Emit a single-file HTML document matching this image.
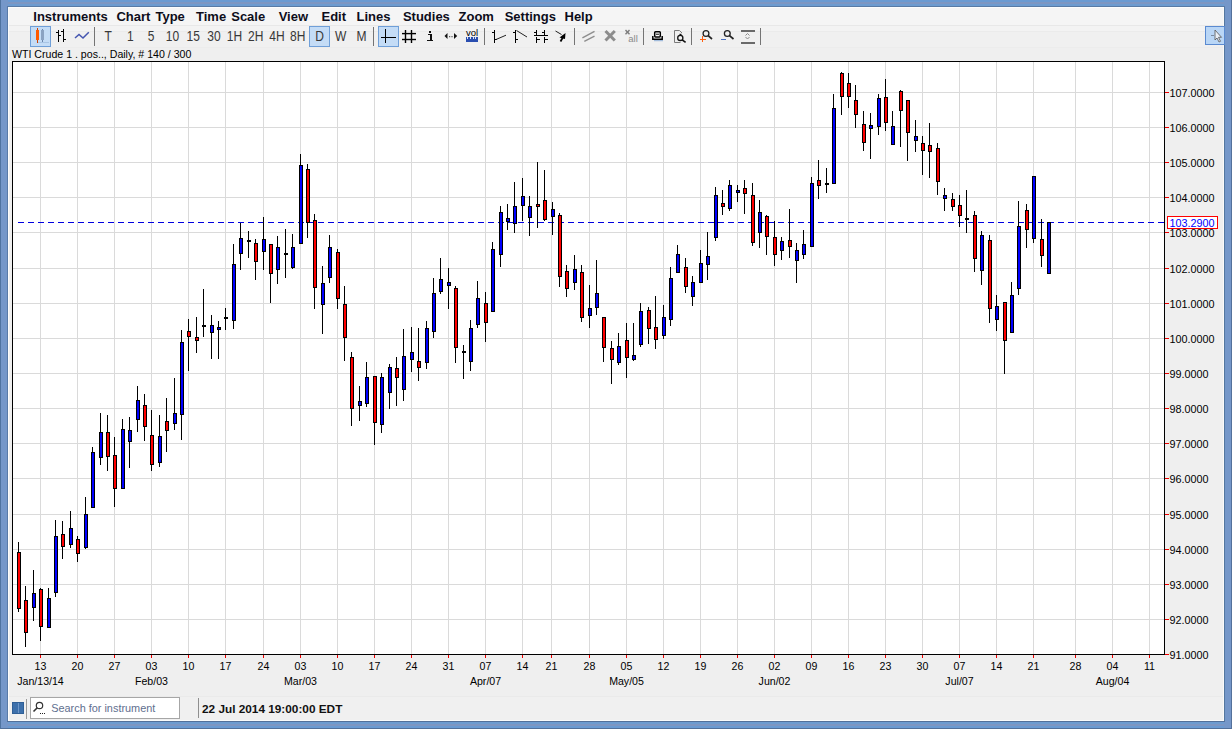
<!DOCTYPE html>
<html><head><meta charset="utf-8"><style>
html,body{margin:0;padding:0;}
body{width:1232px;height:729px;overflow:hidden;position:relative;background:#efefef;font-family:"Liberation Sans",sans-serif;}
svg{position:absolute;left:0;top:0;}
.lb{font-family:"Liberation Sans",sans-serif;font-size:10.6px;fill:#000;}
.mn{font-family:"Liberation Sans",sans-serif;font-size:13px;font-weight:bold;fill:#0d0d1a;word-spacing:1.5px;}
.tbt{font-family:"Liberation Sans",sans-serif;font-size:14px;fill:#383838;}
.vol{font-family:"Liberation Sans",sans-serif;font-size:9.5px;fill:#000;}
.all{font-family:"Liberation Sans",sans-serif;font-size:9.5px;fill:#8a8a8a;}
.st{font-family:"Liberation Sans",sans-serif;font-size:11.8px;font-weight:bold;fill:#111;}
.sr{font-family:"Liberation Sans",sans-serif;font-size:10.9px;fill:#5f6f8f;}
</style></head><body>
<svg width="1232" height="729" viewBox="0 0 1232 729" shape-rendering="crispEdges">
<!-- window frame -->
<rect x="0" y="0" width="1232" height="729" fill="#7597c9"/>
<rect x="8" y="0" width="1216" height="2" fill="#6a9ad2"/>
<rect x="8" y="2" width="1216" height="2" fill="#7d96c2"/>
<rect x="8" y="4" width="1216" height="2" fill="#6d9bd0"/>
<rect x="7" y="6" width="1218" height="1" fill="#587aa5"/>
<rect x="8" y="722" width="1216" height="2" fill="#6d9bd0"/>
<rect x="8" y="724" width="1216" height="2" fill="#7d96c2"/>
<rect x="8" y="726" width="1216" height="2" fill="#6a9ad2"/>
<rect x="0" y="728" width="1232" height="1" fill="#52709a"/>
<rect x="0" y="0" width="1" height="729" fill="#4f73a0"/>
<rect x="7" y="7" width="1" height="715" fill="#587aa8"/>
<rect x="1224" y="7" width="1" height="715" fill="#54779f"/>
<rect x="1231" y="0" width="1" height="729" fill="#54719b"/>
<rect x="7" y="721" width="1218" height="1" fill="#52709a"/>
<!-- client -->
<rect x="8" y="7" width="1216" height="714" fill="#efefef"/>
<rect x="8" y="7" width="1216" height="18" fill="#f5f5f5"/>
<rect x="8" y="25" width="1216" height="1" fill="#e8e8e8"/>
<rect x="8" y="26" width="1216" height="5" fill="#f3f3f3"/>
<rect x="8" y="31" width="1216" height="1" fill="#ebebeb"/>
<rect x="8" y="32" width="1216" height="15" fill="#f0f0f0"/>
<rect x="8" y="47" width="1216" height="1" fill="#ececec"/>
<rect x="8" y="696" width="1216" height="25" fill="#f0f0f0"/>
<rect x="8" y="696" width="1216" height="1" fill="#eaeaea"/>
<rect x="1223" y="7" width="1" height="714" fill="#fafafa"/>
<rect x="8" y="720" width="1216" height="1" fill="#fafafa"/>
<rect x="8" y="7" width="1" height="714" fill="#fcfcfc"/>
<rect x="8" y="7" width="1216" height="1" fill="#fcfcfc"/>
<text x="33.3" y="21" class="mn">Instruments</text>
<text x="116.4" y="21" class="mn">Chart Type</text>
<text x="196" y="21" class="mn">Time Scale</text>
<text x="278.7" y="21" class="mn">View</text>
<text x="321.5" y="21" class="mn">Edit</text>
<text x="356.5" y="21" class="mn">Lines</text>
<text x="402.9" y="21" class="mn">Studies</text>
<text x="458.5" y="21" class="mn">Zoom</text>
<text x="504.7" y="21" class="mn">Settings</text>
<text x="564.5" y="21" class="mn">Help</text>
<rect x="30.5" y="26.5" width="20" height="20" fill="#c4dcf6" stroke="#6f9fd8"/>
<rect x="37" y="28" width="1" height="15" fill="#d04000"/>
<rect x="36" y="30" width="3" height="10" fill="#ff5a00"/>
<rect x="42" y="29" width="1" height="13" fill="#6a84a8"/>
<rect x="41" y="30" width="3" height="10" fill="#8aa2c2"/>
<rect x="38" y="42" width="11" height="1" fill="#a8c4e4"/>
<g fill="#000"><rect x="58" y="30" width="1" height="12"/><rect x="56" y="32" width="2" height="1"/><rect x="59" y="35" width="2" height="1"/><rect x="63" y="29" width="1" height="13"/><rect x="61" y="31" width="2" height="1"/><rect x="64" y="39" width="2" height="1"/></g>
<polyline points="75,38 79,34.5 83,38 88.8,32.3" fill="none" stroke="#4455b0" stroke-width="1.5" shape-rendering="auto"/>
<rect x="94" y="27" width="1" height="19" fill="#747474"/>
<rect x="309.5" y="26.5" width="20" height="20" fill="#c4dcf6" stroke="#6f9fd8"/>
<text transform="translate(108.2,41) scale(0.86,1)" x="0" y="0" text-anchor="middle" class="tbt">T</text>
<text transform="translate(130.3,41) scale(0.86,1)" x="0" y="0" text-anchor="middle" class="tbt">1</text>
<text transform="translate(151,41) scale(0.86,1)" x="0" y="0" text-anchor="middle" class="tbt">5</text>
<text transform="translate(172.5,41) scale(0.86,1)" x="0" y="0" text-anchor="middle" class="tbt">10</text>
<text transform="translate(193.2,41) scale(0.86,1)" x="0" y="0" text-anchor="middle" class="tbt">15</text>
<text transform="translate(214,41) scale(0.86,1)" x="0" y="0" text-anchor="middle" class="tbt">30</text>
<text transform="translate(234.5,41) scale(0.86,1)" x="0" y="0" text-anchor="middle" class="tbt">1H</text>
<text transform="translate(255.8,41) scale(0.86,1)" x="0" y="0" text-anchor="middle" class="tbt">2H</text>
<text transform="translate(277,41) scale(0.86,1)" x="0" y="0" text-anchor="middle" class="tbt">4H</text>
<text transform="translate(297.8,41) scale(0.86,1)" x="0" y="0" text-anchor="middle" class="tbt">8H</text>
<text transform="translate(319.5,41) scale(0.86,1)" x="0" y="0" text-anchor="middle" class="tbt">D</text>
<text transform="translate(340.6,41) scale(0.86,1)" x="0" y="0" text-anchor="middle" class="tbt">W</text>
<text transform="translate(361.4,41) scale(0.86,1)" x="0" y="0" text-anchor="middle" class="tbt">M</text>
<rect x="373" y="27" width="1" height="19" fill="#747474"/>
<rect x="378.5" y="26.5" width="20" height="20" fill="#c4dcf6" stroke="#6f9fd8"/>
<rect x="381" y="37" width="15" height="1" fill="#000"/><rect x="385" y="29" width="1" height="14" fill="#000"/>
<g stroke="#000" stroke-width="1.4" shape-rendering="auto"><line x1="405.5" y1="30" x2="405.5" y2="43"/><line x1="411.5" y1="30" x2="411.5" y2="43"/><line x1="402" y1="33.6" x2="416" y2="33.6"/><line x1="402" y1="39.5" x2="416" y2="39.5"/></g>
<g fill="#111"><rect x="429" y="31" width="2" height="2"/><rect x="428" y="34" width="2" height="1"/><rect x="430" y="34" width="1.6" height="7"/><rect x="427" y="40" width="6" height="1.4"/></g>
<g fill="#111" shape-rendering="auto"><polygon points="444.5,36 447.5,33 447.5,39"/><polygon points="457.2,36 454,33 454,39"/><rect x="449.2" y="36.2" width="1" height="1"/><rect x="451.5" y="36.2" width="1" height="1"/></g>
<text x="472" y="35.6" text-anchor="middle" class="vol">vol</text>
<rect x="466" y="37" width="12" height="4.5" fill="#2a4eb0"/><g fill="#dde4f4"><rect x="467" y="37" width="1" height="2"/><rect x="470" y="37" width="1" height="2"/><rect x="472.5" y="37" width="1" height="2"/><rect x="475" y="37" width="1" height="2"/></g>
<rect x="484" y="28" width="1" height="17" fill="#747474"/>
<g fill="#000"><rect x="494" y="30" width="1" height="13"/><rect x="492" y="32" width="2" height="1"/><rect x="495" y="39" width="2" height="1"/><rect x="515" y="30" width="1" height="13"/><rect x="513" y="32" width="2" height="1"/><rect x="516" y="39" width="2" height="1"/></g>
<g stroke="#222" stroke-width="1" shape-rendering="auto"><line x1="496" y1="39.5" x2="506" y2="35.2"/><line x1="516.5" y1="30.5" x2="527" y2="37"/></g>
<g fill="#000"><rect x="536" y="30" width="1" height="5"/><rect x="536" y="37" width="1" height="6"/><rect x="544" y="30" width="1" height="5"/><rect x="544" y="37" width="1" height="6"/><rect x="534" y="35" width="14" height="1"/><rect x="534" y="32" width="2" height="1"/><rect x="542" y="32" width="2" height="1"/><rect x="537" y="39" width="2.5" height="1.3"/><rect x="545" y="39" width="2.5" height="1.3"/></g>
<g shape-rendering="auto"><line x1="555.5" y1="31" x2="561.5" y2="34.5" stroke="#222" stroke-width="1"/><line x1="560.5" y1="41.5" x2="564" y2="35.5" stroke="#000" stroke-width="1.8"/><polygon points="565.5,33 565,39 559.5,37.5" fill="#000"/></g>
<rect x="574" y="28" width="1" height="17" fill="#747474"/>
<g stroke="#8e8e8e" stroke-width="1.5" fill="none" shape-rendering="auto"><line x1="582.4" y1="37.9" x2="594.5" y2="31.4"/><line x1="584.3" y1="41.3" x2="594.5" y2="36.2"/></g>
<g stroke="#8c8c8c" stroke-width="3" shape-rendering="auto"><line x1="605.5" y1="31" x2="614.8" y2="40.5"/><line x1="614.8" y1="31" x2="605.5" y2="40.5"/></g>
<g stroke="#7c7c7c" stroke-width="1.4" shape-rendering="auto"><line x1="625.5" y1="30" x2="629.5" y2="34.3"/><line x1="629.5" y1="30" x2="625.5" y2="34.3"/></g><text x="633" y="41.8" text-anchor="middle" class="all">all</text>
<rect x="643" y="28" width="1" height="17" fill="#747474"/>
<g shape-rendering="auto"><rect x="654.7" y="31.7" width="5.6" height="5.2" rx="0.8" fill="#fff" stroke="#000" stroke-width="1.5"/><rect x="656" y="33.7" width="3" height="1" fill="#000"/><path d="M652.8,36 v3.3 h9.4 v-3.3" fill="none" stroke="#000" stroke-width="1.5"/><rect x="654" y="40.2" width="9" height="1" fill="#8fb0d8"/></g>
<g shape-rendering="auto"><path d="M674.5,30.5 h5 l2.5,2.5 M674.5,30.5 v12 h6" fill="none" stroke="#7a7a7a" stroke-width="1"/><circle cx="680.3" cy="37.9" r="2.6" fill="none" stroke="#111" stroke-width="1.3"/><rect x="679.5" y="33.8" width="2" height="1.3" fill="#111"/><line x1="682.2" y1="39.8" x2="685.6" y2="42.4" stroke="#111" stroke-width="1.6"/></g>
<rect x="691" y="28" width="1" height="17" fill="#747474"/>
<g shape-rendering="auto"><circle cx="706" cy="33.5" r="2.9" fill="none" stroke="#222" stroke-width="1.3"/><line x1="708.2" y1="35.7" x2="712" y2="39" stroke="#222" stroke-width="1.7"/></g><g fill="#ff6010"><rect x="700" y="38.5" width="5.5" height="1.2"/><rect x="702" y="36.3" width="1.3" height="5.5"/></g>
<g shape-rendering="auto"><circle cx="727.3" cy="33.5" r="2.9" fill="none" stroke="#222" stroke-width="1.3"/><line x1="729.5" y1="35.7" x2="733.5" y2="39" stroke="#222" stroke-width="1.7"/></g><rect x="721" y="39" width="5" height="1" fill="#4a70c0"/>
<g fill="#6a6a6a"><rect x="741" y="30" width="14" height="2"/><rect x="741" y="41.5" width="14" height="2"/></g><g fill="none" stroke="#8a8a8a" stroke-width="1" shape-rendering="auto"><polyline points="745.5,35.5 747.5,33.5 749.5,35.5"/><polyline points="745.5,37 747.5,39 749.5,37"/></g>
<rect x="760" y="28" width="1" height="17" fill="#747474"/>
<rect x="1205.5" y="26.5" width="18.5" height="18" fill="#b9d6f6" stroke="#5a8ad0"/>
<path d="M1215,30 l0,10 l2,-2 l2,4 l1.5,-0.7 l-2,-4 l3,0 z" fill="#e8eef6" stroke="#555" stroke-width="0.8" shape-rendering="auto"/><rect x="1211" y="35" width="3" height="1" fill="#7a8aa0"/>
<text x="12" y="58" class="lb">WTI Crude 1 . pos.., Daily, # 140 / 300</text>
<rect x="12" y="61" width="1153" height="594" fill="#fff"/>
<rect x="40" y="62" width="1" height="592" fill="#dadada"/>
<rect x="77" y="62" width="1" height="592" fill="#dadada"/>
<rect x="114" y="62" width="1" height="592" fill="#dadada"/>
<rect x="151" y="62" width="1" height="592" fill="#dadada"/>
<rect x="188" y="62" width="1" height="592" fill="#dadada"/>
<rect x="225" y="62" width="1" height="592" fill="#dadada"/>
<rect x="263" y="62" width="1" height="592" fill="#dadada"/>
<rect x="300" y="62" width="1" height="592" fill="#dadada"/>
<rect x="337" y="62" width="1" height="592" fill="#dadada"/>
<rect x="374" y="62" width="1" height="592" fill="#dadada"/>
<rect x="411" y="62" width="1" height="592" fill="#dadada"/>
<rect x="448" y="62" width="1" height="592" fill="#dadada"/>
<rect x="485" y="62" width="1" height="592" fill="#dadada"/>
<rect x="522" y="62" width="1" height="592" fill="#dadada"/>
<rect x="551" y="62" width="1" height="592" fill="#dadada"/>
<rect x="589" y="62" width="1" height="592" fill="#dadada"/>
<rect x="626" y="62" width="1" height="592" fill="#dadada"/>
<rect x="663" y="62" width="1" height="592" fill="#dadada"/>
<rect x="700" y="62" width="1" height="592" fill="#dadada"/>
<rect x="737" y="62" width="1" height="592" fill="#dadada"/>
<rect x="774" y="62" width="1" height="592" fill="#dadada"/>
<rect x="811" y="62" width="1" height="592" fill="#dadada"/>
<rect x="848" y="62" width="1" height="592" fill="#dadada"/>
<rect x="885" y="62" width="1" height="592" fill="#dadada"/>
<rect x="922" y="62" width="1" height="592" fill="#dadada"/>
<rect x="959" y="62" width="1" height="592" fill="#dadada"/>
<rect x="996" y="62" width="1" height="592" fill="#dadada"/>
<rect x="1033" y="62" width="1" height="592" fill="#dadada"/>
<rect x="1075" y="62" width="1" height="592" fill="#dadada"/>
<rect x="1112" y="62" width="1" height="592" fill="#dadada"/>
<rect x="1149" y="62" width="1" height="592" fill="#dadada"/>
<rect x="13" y="619" width="1151" height="1" fill="#dadada"/>
<rect x="13" y="584" width="1151" height="1" fill="#dadada"/>
<rect x="13" y="549" width="1151" height="1" fill="#dadada"/>
<rect x="13" y="514" width="1151" height="1" fill="#dadada"/>
<rect x="13" y="478" width="1151" height="1" fill="#dadada"/>
<rect x="13" y="443" width="1151" height="1" fill="#dadada"/>
<rect x="13" y="408" width="1151" height="1" fill="#dadada"/>
<rect x="13" y="373" width="1151" height="1" fill="#dadada"/>
<rect x="13" y="338" width="1151" height="1" fill="#dadada"/>
<rect x="13" y="303" width="1151" height="1" fill="#dadada"/>
<rect x="13" y="268" width="1151" height="1" fill="#dadada"/>
<rect x="13" y="232" width="1151" height="1" fill="#dadada"/>
<rect x="13" y="197" width="1151" height="1" fill="#dadada"/>
<rect x="13" y="162" width="1151" height="1" fill="#dadada"/>
<rect x="13" y="127" width="1151" height="1" fill="#dadada"/>
<rect x="13" y="92" width="1151" height="1" fill="#dadada"/>
<line x1="18" y1="222.5" x2="1164" y2="222.5" stroke="#0000e0" stroke-width="1" stroke-dasharray="6 4"/>
<rect x="18" y="542" width="1" height="70" fill="#000"/>
<rect x="17" y="552" width="4" height="57" fill="#000"/>
<rect x="18" y="553" width="2" height="55" fill="#f00"/>
<rect x="25" y="586" width="1" height="61" fill="#000"/>
<rect x="24" y="600" width="4" height="33" fill="#000"/>
<rect x="25" y="601" width="2" height="31" fill="#f00"/>
<rect x="33" y="570" width="1" height="51" fill="#000"/>
<rect x="32" y="593" width="4" height="15" fill="#000"/>
<rect x="33" y="594" width="2" height="13" fill="#00f"/>
<rect x="40" y="588" width="1" height="53" fill="#000"/>
<rect x="39" y="589" width="4" height="38" fill="#000"/>
<rect x="40" y="590" width="2" height="36" fill="#f00"/>
<rect x="48" y="588" width="1" height="40" fill="#000"/>
<rect x="47" y="598" width="4" height="30" fill="#000"/>
<rect x="48" y="599" width="2" height="28" fill="#00f"/>
<rect x="55" y="520" width="1" height="77" fill="#000"/>
<rect x="54" y="536" width="4" height="57" fill="#000"/>
<rect x="55" y="537" width="2" height="55" fill="#00f"/>
<rect x="62" y="521" width="1" height="38" fill="#000"/>
<rect x="61" y="534" width="4" height="13" fill="#000"/>
<rect x="62" y="535" width="2" height="11" fill="#f00"/>
<rect x="70" y="511" width="1" height="37" fill="#000"/>
<rect x="69" y="528" width="4" height="17" fill="#000"/>
<rect x="70" y="529" width="2" height="15" fill="#00f"/>
<rect x="77" y="536" width="1" height="26" fill="#000"/>
<rect x="76" y="539" width="4" height="15" fill="#000"/>
<rect x="77" y="540" width="2" height="13" fill="#f00"/>
<rect x="85" y="497" width="1" height="52" fill="#000"/>
<rect x="84" y="514" width="4" height="34" fill="#000"/>
<rect x="85" y="515" width="2" height="32" fill="#00f"/>
<rect x="92" y="447" width="1" height="61" fill="#000"/>
<rect x="91" y="452" width="4" height="56" fill="#000"/>
<rect x="92" y="453" width="2" height="54" fill="#00f"/>
<rect x="100" y="413" width="1" height="52" fill="#000"/>
<rect x="99" y="432" width="4" height="26" fill="#000"/>
<rect x="100" y="433" width="2" height="24" fill="#00f"/>
<rect x="107" y="415" width="1" height="56" fill="#000"/>
<rect x="106" y="432" width="4" height="25" fill="#000"/>
<rect x="107" y="433" width="2" height="23" fill="#f00"/>
<rect x="114" y="437" width="1" height="70" fill="#000"/>
<rect x="113" y="455" width="4" height="34" fill="#000"/>
<rect x="114" y="456" width="2" height="32" fill="#f00"/>
<rect x="122" y="419" width="1" height="70" fill="#000"/>
<rect x="121" y="429" width="4" height="60" fill="#000"/>
<rect x="122" y="430" width="2" height="58" fill="#00f"/>
<rect x="129" y="417" width="1" height="51" fill="#000"/>
<rect x="128" y="430" width="4" height="12" fill="#000"/>
<rect x="129" y="431" width="2" height="10" fill="#00f"/>
<rect x="137" y="386" width="1" height="46" fill="#000"/>
<rect x="136" y="400" width="4" height="20" fill="#000"/>
<rect x="137" y="401" width="2" height="18" fill="#00f"/>
<rect x="144" y="394" width="1" height="47" fill="#000"/>
<rect x="143" y="405" width="4" height="22" fill="#000"/>
<rect x="144" y="406" width="2" height="20" fill="#f00"/>
<rect x="151" y="410" width="1" height="61" fill="#000"/>
<rect x="150" y="435" width="4" height="30" fill="#000"/>
<rect x="151" y="436" width="2" height="28" fill="#f00"/>
<rect x="159" y="415" width="1" height="52" fill="#000"/>
<rect x="158" y="436" width="4" height="27" fill="#000"/>
<rect x="159" y="437" width="2" height="25" fill="#00f"/>
<rect x="166" y="398" width="1" height="54" fill="#000"/>
<rect x="165" y="421" width="4" height="10" fill="#000"/>
<rect x="166" y="422" width="2" height="8" fill="#f00"/>
<rect x="174" y="378" width="1" height="52" fill="#000"/>
<rect x="173" y="413" width="4" height="11" fill="#000"/>
<rect x="174" y="414" width="2" height="9" fill="#00f"/>
<rect x="181" y="330" width="1" height="110" fill="#000"/>
<rect x="180" y="342" width="4" height="73" fill="#000"/>
<rect x="181" y="343" width="2" height="71" fill="#00f"/>
<rect x="188" y="319" width="1" height="52" fill="#000"/>
<rect x="187" y="331" width="4" height="6" fill="#000"/>
<rect x="188" y="332" width="2" height="4" fill="#f00"/>
<rect x="196" y="317" width="1" height="36" fill="#000"/>
<rect x="195" y="337" width="4" height="4" fill="#000"/>
<rect x="196" y="338" width="2" height="2" fill="#f00"/>
<rect x="203" y="289" width="1" height="48" fill="#000"/>
<rect x="202" y="325" width="4" height="2" fill="#000"/>
<rect x="211" y="315" width="1" height="44" fill="#000"/>
<rect x="210" y="325" width="4" height="8" fill="#000"/>
<rect x="211" y="326" width="2" height="6" fill="#00f"/>
<rect x="218" y="321" width="1" height="38" fill="#000"/>
<rect x="217" y="327" width="4" height="3" fill="#000"/>
<rect x="218" y="328" width="2" height="1" fill="#00f"/>
<rect x="225" y="308" width="1" height="22" fill="#000"/>
<rect x="224" y="317" width="4" height="2" fill="#000"/>
<rect x="233" y="244" width="1" height="85" fill="#000"/>
<rect x="232" y="264" width="4" height="57" fill="#000"/>
<rect x="233" y="265" width="2" height="55" fill="#00f"/>
<rect x="240" y="223" width="1" height="47" fill="#000"/>
<rect x="239" y="238" width="4" height="16" fill="#000"/>
<rect x="240" y="239" width="2" height="14" fill="#00f"/>
<rect x="248" y="231" width="1" height="27" fill="#000"/>
<rect x="247" y="240" width="4" height="2" fill="#000"/>
<rect x="255" y="239" width="1" height="41" fill="#000"/>
<rect x="254" y="243" width="4" height="19" fill="#000"/>
<rect x="255" y="244" width="2" height="17" fill="#f00"/>
<rect x="263" y="217" width="1" height="53" fill="#000"/>
<rect x="262" y="239" width="4" height="13" fill="#000"/>
<rect x="263" y="240" width="2" height="11" fill="#00f"/>
<rect x="270" y="244" width="1" height="59" fill="#000"/>
<rect x="269" y="244" width="4" height="30" fill="#000"/>
<rect x="270" y="245" width="2" height="28" fill="#f00"/>
<rect x="277" y="236" width="1" height="48" fill="#000"/>
<rect x="276" y="247" width="4" height="23" fill="#000"/>
<rect x="277" y="248" width="2" height="21" fill="#00f"/>
<rect x="285" y="229" width="1" height="49" fill="#000"/>
<rect x="284" y="253" width="4" height="2" fill="#000"/>
<rect x="292" y="234" width="1" height="35" fill="#000"/>
<rect x="291" y="247" width="4" height="21" fill="#000"/>
<rect x="292" y="248" width="2" height="19" fill="#00f"/>
<rect x="300" y="154" width="1" height="90" fill="#000"/>
<rect x="299" y="165" width="4" height="79" fill="#000"/>
<rect x="300" y="166" width="2" height="77" fill="#00f"/>
<rect x="307" y="164" width="1" height="74" fill="#000"/>
<rect x="306" y="169" width="4" height="54" fill="#000"/>
<rect x="307" y="170" width="2" height="52" fill="#f00"/>
<rect x="314" y="214" width="1" height="95" fill="#000"/>
<rect x="313" y="220" width="4" height="68" fill="#000"/>
<rect x="314" y="221" width="2" height="66" fill="#f00"/>
<rect x="322" y="266" width="1" height="68" fill="#000"/>
<rect x="321" y="283" width="4" height="22" fill="#000"/>
<rect x="322" y="284" width="2" height="20" fill="#00f"/>
<rect x="329" y="235" width="1" height="48" fill="#000"/>
<rect x="328" y="247" width="4" height="31" fill="#000"/>
<rect x="329" y="248" width="2" height="29" fill="#00f"/>
<rect x="337" y="249" width="1" height="60" fill="#000"/>
<rect x="336" y="252" width="4" height="47" fill="#000"/>
<rect x="337" y="253" width="2" height="45" fill="#f00"/>
<rect x="344" y="286" width="1" height="75" fill="#000"/>
<rect x="343" y="304" width="4" height="34" fill="#000"/>
<rect x="344" y="305" width="2" height="32" fill="#f00"/>
<rect x="351" y="352" width="1" height="74" fill="#000"/>
<rect x="350" y="357" width="4" height="52" fill="#000"/>
<rect x="351" y="358" width="2" height="50" fill="#f00"/>
<rect x="359" y="386" width="1" height="35" fill="#000"/>
<rect x="358" y="401" width="4" height="5" fill="#000"/>
<rect x="359" y="402" width="2" height="3" fill="#00f"/>
<rect x="366" y="362" width="1" height="45" fill="#000"/>
<rect x="365" y="377" width="4" height="27" fill="#000"/>
<rect x="366" y="378" width="2" height="25" fill="#00f"/>
<rect x="374" y="376" width="1" height="69" fill="#000"/>
<rect x="373" y="376" width="4" height="47" fill="#000"/>
<rect x="374" y="377" width="2" height="45" fill="#f00"/>
<rect x="381" y="373" width="1" height="60" fill="#000"/>
<rect x="380" y="377" width="4" height="48" fill="#000"/>
<rect x="381" y="378" width="2" height="46" fill="#00f"/>
<rect x="389" y="364" width="1" height="45" fill="#000"/>
<rect x="388" y="367" width="4" height="26" fill="#000"/>
<rect x="389" y="368" width="2" height="24" fill="#00f"/>
<rect x="396" y="357" width="1" height="49" fill="#000"/>
<rect x="395" y="368" width="4" height="10" fill="#000"/>
<rect x="396" y="369" width="2" height="8" fill="#f00"/>
<rect x="403" y="329" width="1" height="72" fill="#000"/>
<rect x="402" y="356" width="4" height="34" fill="#000"/>
<rect x="403" y="357" width="2" height="32" fill="#00f"/>
<rect x="411" y="327" width="1" height="45" fill="#000"/>
<rect x="410" y="352" width="4" height="8" fill="#000"/>
<rect x="411" y="353" width="2" height="6" fill="#00f"/>
<rect x="418" y="328" width="1" height="53" fill="#000"/>
<rect x="417" y="361" width="4" height="7" fill="#000"/>
<rect x="418" y="362" width="2" height="5" fill="#f00"/>
<rect x="426" y="321" width="1" height="48" fill="#000"/>
<rect x="425" y="328" width="4" height="35" fill="#000"/>
<rect x="426" y="329" width="2" height="33" fill="#00f"/>
<rect x="433" y="278" width="1" height="60" fill="#000"/>
<rect x="432" y="293" width="4" height="39" fill="#000"/>
<rect x="433" y="294" width="2" height="37" fill="#00f"/>
<rect x="440" y="258" width="1" height="36" fill="#000"/>
<rect x="439" y="279" width="4" height="13" fill="#000"/>
<rect x="440" y="280" width="2" height="11" fill="#00f"/>
<rect x="448" y="268" width="1" height="41" fill="#000"/>
<rect x="447" y="282" width="4" height="4" fill="#000"/>
<rect x="448" y="283" width="2" height="2" fill="#00f"/>
<rect x="455" y="286" width="1" height="77" fill="#000"/>
<rect x="454" y="288" width="4" height="60" fill="#000"/>
<rect x="455" y="289" width="2" height="58" fill="#f00"/>
<rect x="463" y="345" width="1" height="34" fill="#000"/>
<rect x="462" y="351" width="4" height="2" fill="#000"/>
<rect x="470" y="320" width="1" height="51" fill="#000"/>
<rect x="469" y="328" width="4" height="34" fill="#000"/>
<rect x="470" y="329" width="2" height="32" fill="#00f"/>
<rect x="477" y="281" width="1" height="47" fill="#000"/>
<rect x="476" y="298" width="4" height="27" fill="#000"/>
<rect x="477" y="299" width="2" height="25" fill="#00f"/>
<rect x="485" y="292" width="1" height="50" fill="#000"/>
<rect x="484" y="303" width="4" height="20" fill="#000"/>
<rect x="485" y="304" width="2" height="18" fill="#f00"/>
<rect x="492" y="242" width="1" height="70" fill="#000"/>
<rect x="491" y="249" width="4" height="63" fill="#000"/>
<rect x="492" y="250" width="2" height="61" fill="#00f"/>
<rect x="500" y="206" width="1" height="61" fill="#000"/>
<rect x="499" y="212" width="4" height="43" fill="#000"/>
<rect x="500" y="213" width="2" height="41" fill="#00f"/>
<rect x="507" y="204" width="1" height="26" fill="#000"/>
<rect x="506" y="218" width="4" height="4" fill="#000"/>
<rect x="507" y="219" width="2" height="2" fill="#00f"/>
<rect x="514" y="182" width="1" height="51" fill="#000"/>
<rect x="513" y="206" width="4" height="18" fill="#000"/>
<rect x="514" y="207" width="2" height="16" fill="#00f"/>
<rect x="522" y="178" width="1" height="43" fill="#000"/>
<rect x="521" y="196" width="4" height="10" fill="#000"/>
<rect x="522" y="197" width="2" height="8" fill="#00f"/>
<rect x="529" y="196" width="1" height="40" fill="#000"/>
<rect x="528" y="206" width="4" height="12" fill="#000"/>
<rect x="529" y="207" width="2" height="10" fill="#00f"/>
<rect x="537" y="162" width="1" height="66" fill="#000"/>
<rect x="536" y="204" width="4" height="3" fill="#000"/>
<rect x="537" y="205" width="2" height="1" fill="#f00"/>
<rect x="544" y="170" width="1" height="51" fill="#000"/>
<rect x="543" y="200" width="4" height="20" fill="#000"/>
<rect x="544" y="201" width="2" height="18" fill="#f00"/>
<rect x="552" y="202" width="1" height="33" fill="#000"/>
<rect x="551" y="209" width="4" height="8" fill="#000"/>
<rect x="552" y="210" width="2" height="6" fill="#00f"/>
<rect x="559" y="213" width="1" height="74" fill="#000"/>
<rect x="558" y="215" width="4" height="62" fill="#000"/>
<rect x="559" y="216" width="2" height="60" fill="#f00"/>
<rect x="566" y="265" width="1" height="32" fill="#000"/>
<rect x="565" y="271" width="4" height="18" fill="#000"/>
<rect x="566" y="272" width="2" height="16" fill="#f00"/>
<rect x="574" y="255" width="1" height="35" fill="#000"/>
<rect x="573" y="269" width="4" height="14" fill="#000"/>
<rect x="574" y="270" width="2" height="12" fill="#00f"/>
<rect x="581" y="265" width="1" height="57" fill="#000"/>
<rect x="580" y="272" width="4" height="46" fill="#000"/>
<rect x="581" y="273" width="2" height="44" fill="#f00"/>
<rect x="589" y="285" width="1" height="43" fill="#000"/>
<rect x="588" y="308" width="4" height="8" fill="#000"/>
<rect x="589" y="309" width="2" height="6" fill="#00f"/>
<rect x="596" y="260" width="1" height="55" fill="#000"/>
<rect x="595" y="293" width="4" height="15" fill="#000"/>
<rect x="596" y="294" width="2" height="13" fill="#00f"/>
<rect x="603" y="317" width="1" height="45" fill="#000"/>
<rect x="602" y="317" width="4" height="31" fill="#000"/>
<rect x="603" y="318" width="2" height="29" fill="#f00"/>
<rect x="611" y="341" width="1" height="43" fill="#000"/>
<rect x="610" y="348" width="4" height="12" fill="#000"/>
<rect x="611" y="349" width="2" height="10" fill="#f00"/>
<rect x="618" y="333" width="1" height="32" fill="#000"/>
<rect x="617" y="346" width="4" height="17" fill="#000"/>
<rect x="618" y="347" width="2" height="15" fill="#00f"/>
<rect x="626" y="323" width="1" height="55" fill="#000"/>
<rect x="625" y="340" width="4" height="18" fill="#000"/>
<rect x="626" y="341" width="2" height="16" fill="#f00"/>
<rect x="633" y="323" width="1" height="38" fill="#000"/>
<rect x="632" y="355" width="4" height="5" fill="#000"/>
<rect x="633" y="356" width="2" height="3" fill="#00f"/>
<rect x="640" y="303" width="1" height="44" fill="#000"/>
<rect x="639" y="311" width="4" height="34" fill="#000"/>
<rect x="640" y="312" width="2" height="32" fill="#00f"/>
<rect x="648" y="307" width="1" height="37" fill="#000"/>
<rect x="647" y="310" width="4" height="19" fill="#000"/>
<rect x="648" y="311" width="2" height="17" fill="#f00"/>
<rect x="655" y="296" width="1" height="53" fill="#000"/>
<rect x="654" y="327" width="4" height="13" fill="#000"/>
<rect x="655" y="328" width="2" height="11" fill="#f00"/>
<rect x="663" y="305" width="1" height="34" fill="#000"/>
<rect x="662" y="317" width="4" height="19" fill="#000"/>
<rect x="663" y="318" width="2" height="17" fill="#00f"/>
<rect x="670" y="267" width="1" height="59" fill="#000"/>
<rect x="669" y="278" width="4" height="42" fill="#000"/>
<rect x="670" y="279" width="2" height="40" fill="#00f"/>
<rect x="677" y="245" width="1" height="28" fill="#000"/>
<rect x="676" y="254" width="4" height="19" fill="#000"/>
<rect x="677" y="255" width="2" height="17" fill="#00f"/>
<rect x="685" y="258" width="1" height="35" fill="#000"/>
<rect x="684" y="267" width="4" height="20" fill="#000"/>
<rect x="685" y="268" width="2" height="18" fill="#f00"/>
<rect x="692" y="276" width="1" height="30" fill="#000"/>
<rect x="691" y="282" width="4" height="15" fill="#000"/>
<rect x="692" y="283" width="2" height="13" fill="#00f"/>
<rect x="700" y="250" width="1" height="33" fill="#000"/>
<rect x="699" y="263" width="4" height="20" fill="#000"/>
<rect x="700" y="264" width="2" height="18" fill="#00f"/>
<rect x="707" y="232" width="1" height="48" fill="#000"/>
<rect x="706" y="256" width="4" height="9" fill="#000"/>
<rect x="707" y="257" width="2" height="7" fill="#00f"/>
<rect x="715" y="187" width="1" height="54" fill="#000"/>
<rect x="714" y="195" width="4" height="43" fill="#000"/>
<rect x="715" y="196" width="2" height="41" fill="#00f"/>
<rect x="722" y="190" width="1" height="25" fill="#000"/>
<rect x="721" y="203" width="4" height="4" fill="#000"/>
<rect x="722" y="204" width="2" height="2" fill="#f00"/>
<rect x="729" y="180" width="1" height="31" fill="#000"/>
<rect x="728" y="185" width="4" height="24" fill="#000"/>
<rect x="729" y="186" width="2" height="22" fill="#00f"/>
<rect x="737" y="185" width="1" height="17" fill="#000"/>
<rect x="736" y="190" width="4" height="3" fill="#000"/>
<rect x="737" y="191" width="2" height="1" fill="#00f"/>
<rect x="744" y="180" width="1" height="34" fill="#000"/>
<rect x="743" y="188" width="4" height="6" fill="#000"/>
<rect x="744" y="189" width="2" height="4" fill="#f00"/>
<rect x="752" y="183" width="1" height="63" fill="#000"/>
<rect x="751" y="195" width="4" height="48" fill="#000"/>
<rect x="752" y="196" width="2" height="46" fill="#f00"/>
<rect x="759" y="200" width="1" height="48" fill="#000"/>
<rect x="758" y="212" width="4" height="21" fill="#000"/>
<rect x="759" y="213" width="2" height="19" fill="#00f"/>
<rect x="766" y="215" width="1" height="40" fill="#000"/>
<rect x="765" y="216" width="4" height="21" fill="#000"/>
<rect x="766" y="217" width="2" height="19" fill="#f00"/>
<rect x="774" y="221" width="1" height="45" fill="#000"/>
<rect x="773" y="237" width="4" height="18" fill="#000"/>
<rect x="774" y="238" width="2" height="16" fill="#f00"/>
<rect x="781" y="237" width="1" height="23" fill="#000"/>
<rect x="780" y="241" width="4" height="10" fill="#000"/>
<rect x="781" y="242" width="2" height="8" fill="#00f"/>
<rect x="789" y="209" width="1" height="49" fill="#000"/>
<rect x="788" y="240" width="4" height="7" fill="#000"/>
<rect x="789" y="241" width="2" height="5" fill="#f00"/>
<rect x="796" y="243" width="1" height="40" fill="#000"/>
<rect x="795" y="250" width="4" height="11" fill="#000"/>
<rect x="796" y="251" width="2" height="9" fill="#00f"/>
<rect x="803" y="230" width="1" height="29" fill="#000"/>
<rect x="802" y="244" width="4" height="11" fill="#000"/>
<rect x="803" y="245" width="2" height="9" fill="#00f"/>
<rect x="811" y="177" width="1" height="70" fill="#000"/>
<rect x="810" y="183" width="4" height="64" fill="#000"/>
<rect x="811" y="184" width="2" height="62" fill="#00f"/>
<rect x="818" y="160" width="1" height="39" fill="#000"/>
<rect x="817" y="180" width="4" height="6" fill="#000"/>
<rect x="818" y="181" width="2" height="4" fill="#f00"/>
<rect x="826" y="168" width="1" height="25" fill="#000"/>
<rect x="825" y="183" width="4" height="2" fill="#000"/>
<rect x="833" y="94" width="1" height="90" fill="#000"/>
<rect x="832" y="108" width="4" height="76" fill="#000"/>
<rect x="833" y="109" width="2" height="74" fill="#00f"/>
<rect x="841" y="72" width="1" height="43" fill="#000"/>
<rect x="840" y="73" width="4" height="24" fill="#000"/>
<rect x="841" y="74" width="2" height="22" fill="#f00"/>
<rect x="848" y="73" width="1" height="35" fill="#000"/>
<rect x="847" y="83" width="4" height="14" fill="#000"/>
<rect x="848" y="84" width="2" height="12" fill="#f00"/>
<rect x="855" y="85" width="1" height="43" fill="#000"/>
<rect x="854" y="100" width="4" height="15" fill="#000"/>
<rect x="855" y="101" width="2" height="13" fill="#f00"/>
<rect x="863" y="111" width="1" height="40" fill="#000"/>
<rect x="862" y="124" width="4" height="19" fill="#000"/>
<rect x="863" y="125" width="2" height="17" fill="#f00"/>
<rect x="870" y="113" width="1" height="46" fill="#000"/>
<rect x="869" y="125" width="4" height="4" fill="#000"/>
<rect x="870" y="126" width="2" height="2" fill="#00f"/>
<rect x="878" y="94" width="1" height="41" fill="#000"/>
<rect x="877" y="98" width="4" height="29" fill="#000"/>
<rect x="878" y="99" width="2" height="27" fill="#00f"/>
<rect x="885" y="79" width="1" height="52" fill="#000"/>
<rect x="884" y="97" width="4" height="26" fill="#000"/>
<rect x="885" y="98" width="2" height="24" fill="#f00"/>
<rect x="892" y="111" width="1" height="34" fill="#000"/>
<rect x="891" y="126" width="4" height="19" fill="#000"/>
<rect x="892" y="127" width="2" height="17" fill="#00f"/>
<rect x="900" y="90" width="1" height="57" fill="#000"/>
<rect x="899" y="91" width="4" height="20" fill="#000"/>
<rect x="900" y="92" width="2" height="18" fill="#f00"/>
<rect x="907" y="100" width="1" height="61" fill="#000"/>
<rect x="906" y="100" width="4" height="33" fill="#000"/>
<rect x="907" y="101" width="2" height="31" fill="#f00"/>
<rect x="915" y="120" width="1" height="32" fill="#000"/>
<rect x="914" y="136" width="4" height="5" fill="#000"/>
<rect x="915" y="137" width="2" height="3" fill="#00f"/>
<rect x="922" y="136" width="1" height="39" fill="#000"/>
<rect x="921" y="143" width="4" height="8" fill="#000"/>
<rect x="922" y="144" width="2" height="6" fill="#f00"/>
<rect x="929" y="123" width="1" height="55" fill="#000"/>
<rect x="928" y="145" width="4" height="7" fill="#000"/>
<rect x="929" y="146" width="2" height="5" fill="#f00"/>
<rect x="937" y="143" width="1" height="52" fill="#000"/>
<rect x="936" y="148" width="4" height="34" fill="#000"/>
<rect x="937" y="149" width="2" height="32" fill="#f00"/>
<rect x="944" y="188" width="1" height="23" fill="#000"/>
<rect x="943" y="195" width="4" height="4" fill="#000"/>
<rect x="944" y="196" width="2" height="2" fill="#00f"/>
<rect x="952" y="193" width="1" height="18" fill="#000"/>
<rect x="951" y="199" width="4" height="8" fill="#000"/>
<rect x="952" y="200" width="2" height="6" fill="#f00"/>
<rect x="959" y="195" width="1" height="32" fill="#000"/>
<rect x="958" y="205" width="4" height="11" fill="#000"/>
<rect x="959" y="206" width="2" height="9" fill="#f00"/>
<rect x="966" y="190" width="1" height="43" fill="#000"/>
<rect x="965" y="218" width="4" height="2" fill="#000"/>
<rect x="974" y="211" width="1" height="61" fill="#000"/>
<rect x="973" y="215" width="4" height="44" fill="#000"/>
<rect x="974" y="216" width="2" height="42" fill="#f00"/>
<rect x="981" y="231" width="1" height="54" fill="#000"/>
<rect x="980" y="235" width="4" height="36" fill="#000"/>
<rect x="981" y="236" width="2" height="34" fill="#00f"/>
<rect x="989" y="235" width="1" height="88" fill="#000"/>
<rect x="988" y="240" width="4" height="69" fill="#000"/>
<rect x="989" y="241" width="2" height="67" fill="#f00"/>
<rect x="996" y="295" width="1" height="36" fill="#000"/>
<rect x="995" y="306" width="4" height="14" fill="#000"/>
<rect x="996" y="307" width="2" height="12" fill="#00f"/>
<rect x="1004" y="302" width="1" height="72" fill="#000"/>
<rect x="1003" y="302" width="4" height="39" fill="#000"/>
<rect x="1004" y="303" width="2" height="37" fill="#f00"/>
<rect x="1011" y="282" width="1" height="51" fill="#000"/>
<rect x="1010" y="295" width="4" height="38" fill="#000"/>
<rect x="1011" y="296" width="2" height="36" fill="#00f"/>
<rect x="1018" y="201" width="1" height="94" fill="#000"/>
<rect x="1017" y="226" width="4" height="63" fill="#000"/>
<rect x="1018" y="227" width="2" height="61" fill="#00f"/>
<rect x="1026" y="204" width="1" height="44" fill="#000"/>
<rect x="1025" y="210" width="4" height="20" fill="#000"/>
<rect x="1026" y="211" width="2" height="18" fill="#f00"/>
<rect x="1033" y="176" width="1" height="67" fill="#000"/>
<rect x="1032" y="176" width="4" height="63" fill="#000"/>
<rect x="1033" y="177" width="2" height="61" fill="#00f"/>
<rect x="1041" y="219" width="1" height="48" fill="#000"/>
<rect x="1040" y="239" width="4" height="17" fill="#000"/>
<rect x="1041" y="240" width="2" height="15" fill="#f00"/>
<rect x="1048" y="222" width="1" height="52" fill="#000"/>
<rect x="1047" y="222" width="4" height="52" fill="#000"/>
<rect x="1048" y="223" width="2" height="50" fill="#00f"/>
<rect x="12" y="61" width="1153" height="1" fill="#000"/>
<rect x="12" y="654" width="1153" height="1" fill="#000"/>
<rect x="12" y="61" width="1" height="594" fill="#000"/>
<rect x="1164" y="61" width="1" height="594" fill="#000"/>
<rect x="40" y="655" width="1" height="3" fill="#e00"/>
<text x="40.5" y="670" text-anchor="middle" class="lb">13</text>
<text x="40.5" y="685" text-anchor="middle" class="lb">Jan/13/14</text>
<rect x="77" y="655" width="1" height="3" fill="#e00"/>
<text x="77.5" y="670" text-anchor="middle" class="lb">20</text>
<rect x="114" y="655" width="1" height="3" fill="#e00"/>
<text x="114.5" y="670" text-anchor="middle" class="lb">27</text>
<rect x="151" y="655" width="1" height="3" fill="#e00"/>
<text x="151.5" y="670" text-anchor="middle" class="lb">03</text>
<text x="151.5" y="685" text-anchor="middle" class="lb">Feb/03</text>
<rect x="188" y="655" width="1" height="3" fill="#e00"/>
<text x="188.5" y="670" text-anchor="middle" class="lb">10</text>
<rect x="225" y="655" width="1" height="3" fill="#e00"/>
<text x="225.5" y="670" text-anchor="middle" class="lb">17</text>
<rect x="263" y="655" width="1" height="3" fill="#e00"/>
<text x="263.5" y="670" text-anchor="middle" class="lb">24</text>
<rect x="300" y="655" width="1" height="3" fill="#e00"/>
<text x="300.5" y="670" text-anchor="middle" class="lb">03</text>
<text x="300.5" y="685" text-anchor="middle" class="lb">Mar/03</text>
<rect x="337" y="655" width="1" height="3" fill="#e00"/>
<text x="337.5" y="670" text-anchor="middle" class="lb">10</text>
<rect x="374" y="655" width="1" height="3" fill="#e00"/>
<text x="374.5" y="670" text-anchor="middle" class="lb">17</text>
<rect x="411" y="655" width="1" height="3" fill="#e00"/>
<text x="411.5" y="670" text-anchor="middle" class="lb">24</text>
<rect x="448" y="655" width="1" height="3" fill="#e00"/>
<text x="448.5" y="670" text-anchor="middle" class="lb">31</text>
<rect x="485" y="655" width="1" height="3" fill="#e00"/>
<text x="485.5" y="670" text-anchor="middle" class="lb">07</text>
<text x="485.5" y="685" text-anchor="middle" class="lb">Apr/07</text>
<rect x="522" y="655" width="1" height="3" fill="#e00"/>
<text x="522.5" y="670" text-anchor="middle" class="lb">14</text>
<rect x="551" y="655" width="1" height="3" fill="#e00"/>
<text x="551.5" y="670" text-anchor="middle" class="lb">21</text>
<rect x="589" y="655" width="1" height="3" fill="#e00"/>
<text x="589.5" y="670" text-anchor="middle" class="lb">28</text>
<rect x="626" y="655" width="1" height="3" fill="#e00"/>
<text x="626.5" y="670" text-anchor="middle" class="lb">05</text>
<text x="626.5" y="685" text-anchor="middle" class="lb">May/05</text>
<rect x="663" y="655" width="1" height="3" fill="#e00"/>
<text x="663.5" y="670" text-anchor="middle" class="lb">12</text>
<rect x="700" y="655" width="1" height="3" fill="#e00"/>
<text x="700.5" y="670" text-anchor="middle" class="lb">19</text>
<rect x="737" y="655" width="1" height="3" fill="#e00"/>
<text x="737.5" y="670" text-anchor="middle" class="lb">26</text>
<rect x="774" y="655" width="1" height="3" fill="#e00"/>
<text x="774.5" y="670" text-anchor="middle" class="lb">02</text>
<text x="774.5" y="685" text-anchor="middle" class="lb">Jun/02</text>
<rect x="811" y="655" width="1" height="3" fill="#e00"/>
<text x="811.5" y="670" text-anchor="middle" class="lb">09</text>
<rect x="848" y="655" width="1" height="3" fill="#e00"/>
<text x="848.5" y="670" text-anchor="middle" class="lb">16</text>
<rect x="885" y="655" width="1" height="3" fill="#e00"/>
<text x="885.5" y="670" text-anchor="middle" class="lb">23</text>
<rect x="922" y="655" width="1" height="3" fill="#e00"/>
<text x="922.5" y="670" text-anchor="middle" class="lb">30</text>
<rect x="959" y="655" width="1" height="3" fill="#e00"/>
<text x="959.5" y="670" text-anchor="middle" class="lb">07</text>
<text x="959.5" y="685" text-anchor="middle" class="lb">Jul/07</text>
<rect x="996" y="655" width="1" height="3" fill="#e00"/>
<text x="996.5" y="670" text-anchor="middle" class="lb">14</text>
<rect x="1033" y="655" width="1" height="3" fill="#e00"/>
<text x="1033.5" y="670" text-anchor="middle" class="lb">21</text>
<rect x="1075" y="655" width="1" height="3" fill="#e00"/>
<text x="1075.5" y="670" text-anchor="middle" class="lb">28</text>
<rect x="1112" y="655" width="1" height="3" fill="#e00"/>
<text x="1112.5" y="670" text-anchor="middle" class="lb">04</text>
<text x="1112.5" y="685" text-anchor="middle" class="lb">Aug/04</text>
<rect x="1149" y="655" width="1" height="3" fill="#e00"/>
<text x="1149.5" y="670" text-anchor="middle" class="lb">11</text>
<rect x="1165" y="654" width="4" height="1" fill="#e00"/>
<text x="1169.5" y="658.5" class="lb" style="font-size:10.8px">91.0000</text>
<rect x="1165" y="619" width="4" height="1" fill="#e00"/>
<text x="1169.5" y="623.5" class="lb" style="font-size:10.8px">92.0000</text>
<rect x="1165" y="584" width="4" height="1" fill="#e00"/>
<text x="1169.5" y="588.5" class="lb" style="font-size:10.8px">93.0000</text>
<rect x="1165" y="549" width="4" height="1" fill="#e00"/>
<text x="1169.5" y="553.5" class="lb" style="font-size:10.8px">94.0000</text>
<rect x="1165" y="514" width="4" height="1" fill="#e00"/>
<text x="1169.5" y="518.5" class="lb" style="font-size:10.8px">95.0000</text>
<rect x="1165" y="478" width="4" height="1" fill="#e00"/>
<text x="1169.5" y="482.5" class="lb" style="font-size:10.8px">96.0000</text>
<rect x="1165" y="443" width="4" height="1" fill="#e00"/>
<text x="1169.5" y="447.5" class="lb" style="font-size:10.8px">97.0000</text>
<rect x="1165" y="408" width="4" height="1" fill="#e00"/>
<text x="1169.5" y="412.5" class="lb" style="font-size:10.8px">98.0000</text>
<rect x="1165" y="373" width="4" height="1" fill="#e00"/>
<text x="1169.5" y="377.5" class="lb" style="font-size:10.8px">99.0000</text>
<rect x="1165" y="338" width="4" height="1" fill="#e00"/>
<text x="1169.5" y="342.5" class="lb" style="font-size:10.8px">100.0000</text>
<rect x="1165" y="303" width="4" height="1" fill="#e00"/>
<text x="1169.5" y="307.5" class="lb" style="font-size:10.8px">101.0000</text>
<rect x="1165" y="268" width="4" height="1" fill="#e00"/>
<text x="1169.5" y="272.5" class="lb" style="font-size:10.8px">102.0000</text>
<rect x="1165" y="232" width="4" height="1" fill="#e00"/>
<text x="1169.5" y="236.5" class="lb" style="font-size:10.8px">103.0000</text>
<rect x="1165" y="197" width="4" height="1" fill="#e00"/>
<text x="1169.5" y="201.5" class="lb" style="font-size:10.8px">104.0000</text>
<rect x="1165" y="162" width="4" height="1" fill="#e00"/>
<text x="1169.5" y="166.5" class="lb" style="font-size:10.8px">105.0000</text>
<rect x="1165" y="127" width="4" height="1" fill="#e00"/>
<text x="1169.5" y="131.5" class="lb" style="font-size:10.8px">106.0000</text>
<rect x="1165" y="92" width="4" height="1" fill="#e00"/>
<text x="1169.5" y="96.5" class="lb" style="font-size:10.8px">107.0000</text>
<rect x="1167.5" y="216.5" width="50" height="12" fill="#fff" stroke="#f00" stroke-width="1"/>
<text x="1169.5" y="226.5" class="lb" style="fill:#0000ff;font-size:10.8px">103.2900</text>
<!-- status bar -->
<rect x="12" y="702" width="12" height="12" fill="#2f5f96"/>
<rect x="13" y="703" width="10" height="10" fill="#3d70ab"/>
<rect x="17.5" y="703" width="1" height="10" fill="#6d96c8"/>
<rect x="26" y="699" width="1" height="20" fill="#9a9a9a"/>
<rect x="30.5" y="697.5" width="149" height="21" fill="#fff" stroke="#a6a6a6" stroke-width="1"/>
<circle cx="39.5" cy="705.5" r="3.2" fill="none" stroke="#333" stroke-width="1.2" shape-rendering="auto"/>
<line x1="37.3" y1="707.7" x2="33.5" y2="711.5" stroke="#333" stroke-width="1.6" shape-rendering="auto"/>
<g fill="#222"><rect x="40" y="713" width="1" height="1"/><rect x="42" y="713" width="1" height="1"/><rect x="44" y="713" width="1" height="1"/></g>
<text x="51.2" y="712" class="sr">Search for instrument</text>
<rect x="198" y="698" width="1" height="20" fill="#8f8f8f"/>
<text x="202" y="713.3" class="st">22 Jul 2014 19:00:00 EDT</text>
</svg>
</body></html>
